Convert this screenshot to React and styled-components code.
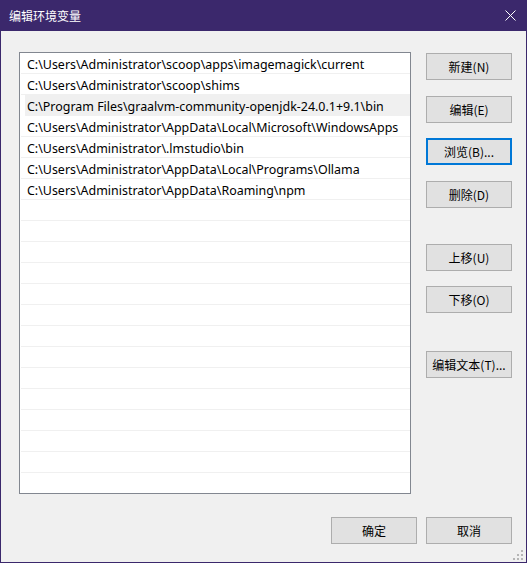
import React from "react";
import styled, { createGlobalStyle } from "styled-components";

const Global = createGlobalStyle`
  html, body { margin: 0; padding: 0; background: #3b286c; }
  body { font-family: "Segoe UI", "Noto Sans", "Noto Sans CJK SC", sans-serif; font-size: 12px; }
`;

const Window = styled.div`
  width: 527px;
  height: 563px;
  box-sizing: border-box;
  display: flex;
  flex-direction: column;
  background: #3b286c;
  border: 1px solid #3b286c;
  border-top: none;
  position: relative;
`;

const TitleBar = styled.div`
  height: 31px;
  flex: none;
  display: flex;
  align-items: center;
  justify-content: space-between;
  padding: 0 10px 0 8px;
  color: #ffffff;
  font-family: "Noto Sans CJK SC", sans-serif;
  font-size: 12px;
`;

const Title = styled.span`
  line-height: 1;
  margin-top: 1px;
`;

const CloseIcon = styled.svg`
  width: 11px;
  height: 11px;
  display: block;
`;

const Body = styled.div`
  flex: 1;
  background: #f0f0f0;
  padding: 21px 14px 18px 18px;
  display: flex;
  flex-direction: column;
`;

const Main = styled.div`
  display: flex;
  gap: 15px;
  align-items: flex-start;
`;

const List = styled.div`
  width: 392px;
  height: 442px;
  box-sizing: border-box;
  border: 1px solid #828790;
  background: #ffffff;
  overflow: hidden;
  display: flex;
  flex-direction: column;
`;

const Row = styled.div`
  height: 21px;
  flex: none;
  box-sizing: border-box;
  margin-left: ${(p) => (p.$selected ? "5px" : "1px")};
  border-bottom: 1px solid #f0f0f0;
  background: ${(p) => (p.$selected ? "#f0f0f0" : "transparent")};
  padding-left: ${(p) => (p.$selected ? "2px" : "6px")};
  padding-top: 2px;
  display: flex;
  align-items: center;
  font-family: "Noto Sans", "Noto Sans CJK SC", sans-serif;
  font-size: 12.45px;
  color: #000;
  white-space: nowrap;
`;

const ButtonColumn = styled.div`
  display: flex;
  flex-direction: column;
  width: 86px;
  padding-top: 1px;
`;

const Button = styled.div`
  width: ${(p) => p.$w || 86}px;
  height: 27px;
  box-sizing: border-box;
  flex: none;
  margin-top: ${(p) => p.$mt || 0}px;
  background: #e1e1e1;
  border: ${(p) => (p.$focus ? "2px solid #0078d7" : "1px solid #adadad")};
  display: flex;
  align-items: center;
  justify-content: center;
  font-family: "Noto Sans CJK SC", sans-serif;
  font-size: 12px;
  color: #000;
  white-space: nowrap;
`;

const Footer = styled.div`
  margin-top: 23px;
  display: flex;
  justify-content: flex-end;
  gap: 9px;
`;

const Grip = styled.svg`
  position: absolute;
  right: 3px;
  bottom: 2px;
  width: 11px;
  height: 11px;
`;

const paths = [
  "C:\\Users\\Administrator\\scoop\\apps\\imagemagick\\current",
  "C:\\Users\\Administrator\\scoop\\shims",
  "C:\\Program Files\\graalvm-community-openjdk-24.0.1+9.1\\bin",
  "C:\\Users\\Administrator\\AppData\\Local\\Microsoft\\WindowsApps",
  "C:\\Users\\Administrator\\.lmstudio\\bin",
  "C:\\Users\\Administrator\\AppData\\Local\\Programs\\Ollama",
  "C:\\Users\\Administrator\\AppData\\Roaming\\npm",
];

const rows = Array.from({ length: 22 }, (_, i) => paths[i] || "");

const side = [
  { label: "新建(N)", mt: 0 },
  { label: "编辑(E)", mt: 16 },
  { label: "浏览(B)...", mt: 15, focus: true },
  { label: "删除(D)", mt: 16 },
  { label: "上移(U)", mt: 36 },
  { label: "下移(O)", mt: 15 },
  { label: "编辑文本(T)...", mt: 38 },
];

export default function App() {
  return (
    <>
      <Global />
      <Window>
        <TitleBar>
          <Title>编辑环境变量</Title>
          <CloseIcon viewBox="0 0 11 11">
            <path d="M0.5 0.5 L10.5 10.5 M10.5 0.5 L0.5 10.5" stroke="#fff" strokeWidth="1" fill="none" />
          </CloseIcon>
        </TitleBar>
        <Body>
          <Main>
            <List>
              {rows.map((r, i) => (
                <Row key={i} $selected={i === 2}>
                  {r}
                </Row>
              ))}
            </List>
            <ButtonColumn>
              {side.map((b) => (
                <Button key={b.label} $mt={b.mt} $focus={b.focus}>
                  {b.label}
                </Button>
              ))}
            </ButtonColumn>
          </Main>
          <Footer>
            <Button $w={86}>确定</Button>
            <Button $w={86}>取消</Button>
          </Footer>
        </Body>
        <Grip viewBox="0 0 11 11">
          {[
            [8, 0],
            [4, 4],
            [8, 4],
            [0, 8],
            [4, 8],
            [8, 8],
          ].map(([x, y]) => (
            <rect key={`${x}-${y}`} x={x + 1} y={y + 1} width="2" height="2" fill="#b5b5b5" />
          ))}
        </Grip>
      </Window>
    </>
  );
}
